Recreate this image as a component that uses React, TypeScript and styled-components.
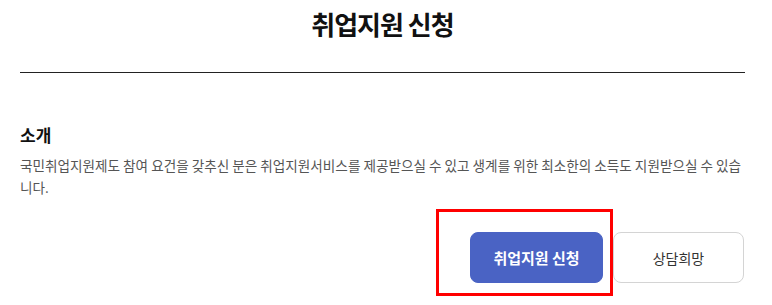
import React from 'react';
import styled, { createGlobalStyle } from 'styled-components';

const GlobalStyle = createGlobalStyle`
  body {
    margin: 0;
    background: #fff;
    font-family: "Noto Sans CJK KR", "Noto Sans", sans-serif;
  }
`;

const Page = styled.div`
  min-height: 305px;
  box-sizing: border-box;
  padding: 0 27px 22px 20px;
`;

const Header = styled.div`
  height: 72px;
  border-bottom: 1px solid #222;
  display: flex;
  justify-content: center;
`;

const Title = styled.h1`
  margin: 4px 0 0;
  font-size: 26px;
  line-height: 40px;
  font-weight: 700;
  letter-spacing: -1px;
  color: #111;
`;

const Section = styled.section`
  padding-top: 50px;
`;

const SectionTitle = styled.h2`
  margin: 0;
  font-size: 17px;
  line-height: 24px;
  font-weight: 700;
  color: #111;
`;

const Description = styled.p`
  margin: 7px 0 0;
  font-size: 13.6px;
  line-height: 22px;
  color: #555;
  letter-spacing: 0;
  word-break: break-all;
`;

const Actions = styled.div`
  display: flex;
  justify-content: flex-end;
  align-items: flex-start;
  gap: 10px;
  margin-top: 34px;
  padding-right: 1px;
`;

const Highlight = styled.div`
  position: relative;
  display: flex;
`;

const Marker = styled.div`
  position: absolute;
  top: -23px;
  left: -34px;
  right: -10px;
  bottom: -13px;
  border: 3px solid #f00;
  pointer-events: none;
  z-index: 2;
`;

const Button = styled.button<{ $primary?: boolean }>`
  display: block;
  height: 51px;
  width: ${(p) => (p.$primary ? '133px' : '131px')};
  border-radius: 8px;
  font-family: inherit;
  font-size: ${(p) => (p.$primary ? '15px' : '14px')};
  font-weight: ${(p) => (p.$primary ? 700 : 400)};
  color: ${(p) => (p.$primary ? '#fff' : '#333')};
  background: ${(p) => (p.$primary ? '#4a63c4' : '#fff')};
  border: 1px solid ${(p) => (p.$primary ? '#4a63c4' : '#d4d4d4')};
  cursor: pointer;
`;

const App = () => {
  return (
    <Page>
      <GlobalStyle />
      <Header>
        <Title>취업지원 신청</Title>
      </Header>
      <Section>
        <SectionTitle>소개</SectionTitle>
        <Description>
          국민취업지원제도 참여 요건을 갖추신 분은 취업지원서비스를 제공받으실 수 있고 생계를 위한 최소한의 소득도 지원받으실 수 있습니다.
        </Description>
      </Section>
      <Actions>
        <Highlight>
          <Button $primary>취업지원 신청</Button>
          <Marker />
        </Highlight>
        <Button>상담희망</Button>
      </Actions>
    </Page>
  );
};

export default App;
